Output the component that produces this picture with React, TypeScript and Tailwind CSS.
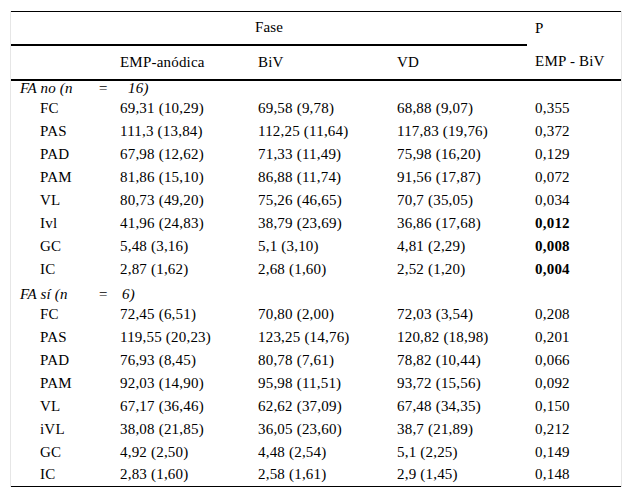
import React from 'react';

type Row = { label: string; emp: string; biv: string; vd: string; p: string; bold?: boolean };

const faNo: Row[] = [
  { label: 'FC', emp: '69,31 (10,29)', biv: '69,58 (9,78)', vd: '68,88 (9,07)', p: '0,355' },
  { label: 'PAS', emp: '111,3 (13,84)', biv: '112,25 (11,64)', vd: '117,83 (19,76)', p: '0,372' },
  { label: 'PAD', emp: '67,98 (12,62)', biv: '71,33 (11,49)', vd: '75,98 (16,20)', p: '0,129' },
  { label: 'PAM', emp: '81,86 (15,10)', biv: '86,88 (11,74)', vd: '91,56 (17,87)', p: '0,072' },
  { label: 'VL', emp: '80,73 (49,20)', biv: '75,26 (46,65)', vd: '70,7 (35,05)', p: '0,034' },
  { label: 'Ivl', emp: '41,96 (24,83)', biv: '38,79 (23,69)', vd: '36,86 (17,68)', p: '0,012', bold: true },
  { label: 'GC', emp: '5,48 (3,16)', biv: '5,1 (3,10)', vd: '4,81 (2,29)', p: '0,008', bold: true },
  { label: 'IC', emp: '2,87 (1,62)', biv: '2,68 (1,60)', vd: '2,52 (1,20)', p: '0,004', bold: true },
];

const faSi: Row[] = [
  { label: 'FC', emp: '72,45 (6,51)', biv: '70,80 (2,00)', vd: '72,03 (3,54)', p: '0,208' },
  { label: 'PAS', emp: '119,55 (20,23)', biv: '123,25 (14,76)', vd: '120,82 (18,98)', p: '0,201' },
  { label: 'PAD', emp: '76,93 (8,45)', biv: '80,78 (7,61)', vd: '78,82 (10,44)', p: '0,066' },
  { label: 'PAM', emp: '92,03 (14,90)', biv: '95,98 (11,51)', vd: '93,72 (15,56)', p: '0,092' },
  { label: 'VL', emp: '67,17 (36,46)', biv: '62,62 (37,09)', vd: '67,48 (34,35)', p: '0,150' },
  { label: 'iVL', emp: '38,08 (21,85)', biv: '36,05 (23,60)', vd: '38,7 (21,89)', p: '0,212' },
  { label: 'GC', emp: '4,92 (2,50)', biv: '4,48 (2,54)', vd: '5,1 (2,25)', p: '0,149' },
  { label: 'IC', emp: '2,83 (1,60)', biv: '2,58 (1,61)', vd: '2,9 (1,45)', p: '0,148' },
];

function DataRow({ r }: { r: Row }) {
  return (
    <tr className="h-[23px]">
      <td className="pl-[29px] p-0">{r.label}</td>
      <td className="p-0">{r.emp}</td>
      <td className="p-0">{r.biv}</td>
      <td className="p-0">{r.vd}</td>
      <td className={`p-0 pl-[8px] ${r.bold ? 'font-bold' : ''}`}>{r.p}</td>
    </tr>
  );
}

function GroupTitle({ name, n, eqWidth }: { name: string; n: string; eqWidth: string }) {
  return (
    <td colSpan={5} className="p-0 pl-[9px] italic whitespace-nowrap">
      <span className="inline-block w-[78px]">{name} (n</span>
      <span className={`inline-block ${eqWidth}`}>=</span>
      <span>{n})</span>
    </td>
  );
}

export default function App() {
  return (
    <div className="w-[632px] h-[497px] bg-white pt-[11px] pl-[10px]">
      <div className="w-[612px] border-x border-[#e6e6e6]">
        <table
          className="w-[610px] table-fixed border-collapse text-[15px] leading-none text-black tracking-[0.2px]"
          style={{ fontFamily: '"Liberation Serif", "Times New Roman", serif' }}
        >
          <colgroup>
            <col className="w-[109px]" />
            <col className="w-[138px]" />
            <col className="w-[139px]" />
            <col className="w-[130px]" />
            <col className="w-[94px]" />
          </colgroup>
          <thead>
            <tr className="h-[33px] border-t border-black">
              <td colSpan={4} className="p-0 text-center border-b-2 border-black">Fase</td>
              <td className="p-0 pl-[8px]">P</td>
            </tr>
            <tr className="h-[35px] border-b-2 border-black">
              <td className="p-0"></td>
              <td className="p-0">EMP-anódica</td>
              <td className="p-0">BiV</td>
              <td className="p-0">VD</td>
              <td className="p-0 pl-[8px]">EMP - BiV</td>
            </tr>
          </thead>
          <tbody>
            <tr className="h-[17px]">
              <GroupTitle name="FA no" n="16" eqWidth="w-[30px]" />
            </tr>
            {faNo.map((r) => (
              <DataRow key={'no' + r.label} r={r} />
            ))}
            <tr className="h-[22px] [&>td]:pt-[5px]">
              <GroupTitle name="FA sí" n="6" eqWidth="w-[24px]" />
            </tr>
            {faSi.map((r) => (
              <DataRow key={'si' + r.label} r={r} />
            ))}
            <tr className="border-t border-black">
              <td colSpan={5} className="p-0 h-0"></td>
            </tr>
          </tbody>
        </table>
      </div>
    </div>
  );
}
